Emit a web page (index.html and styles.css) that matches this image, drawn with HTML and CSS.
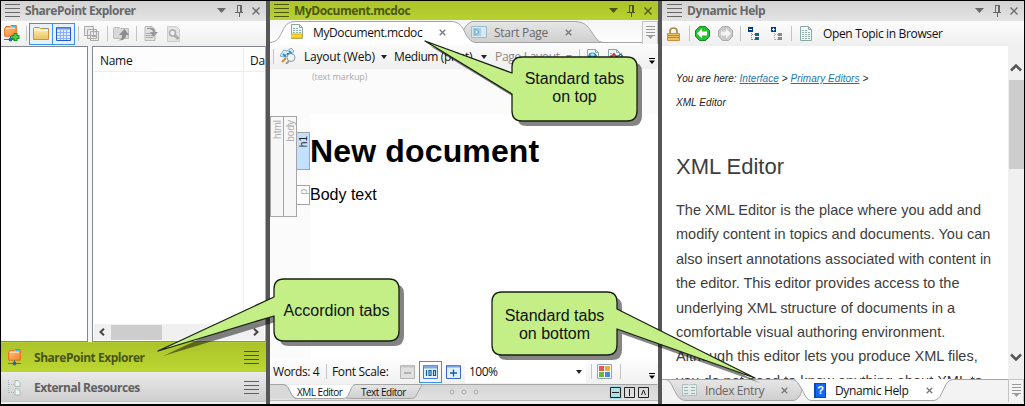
FILE: index.html
```html
<!DOCTYPE html>
<html lang="en">
<head>
<meta charset="utf-8">
<title>MyDocument.mcdoc</title>
<link rel="stylesheet" href="styles.css">
</head>
<body>
<svg class="defs" width="0" height="0">
  <defs>
    <linearGradient id="tabGrey" x1="0" y1="0" x2="0" y2="1"><stop offset="0" stop-color="#e6e6e6"/><stop offset="1" stop-color="#cfcfcf"/></linearGradient>
    <linearGradient id="folderOrange" x1="0" y1="0" x2="1" y2="1"><stop offset="0" stop-color="#ffc27a"/><stop offset="1" stop-color="#f8842c"/></linearGradient>
    <linearGradient id="folderYellow" x1="0" y1="0" x2="0" y2="1"><stop offset="0" stop-color="#fff3bd"/><stop offset="1" stop-color="#e9c25c"/></linearGradient>
    <symbol id="grip" viewBox="0 0 15 14"><path d="M0 .5h15M0 4.500h15M0 8.500h15M0 12.500h15" stroke="currentColor"/></symbol>
    <symbol id="controls" viewBox="0 0 44 14"><path d="M0 4h9l-4.500 5z" fill="currentColor"/><path d="M20.500 1v7M24.500 1v7M20 1.500h5M18 8.500h8M22.500 9v4M23.500 1v7" stroke="currentColor" fill="none"/><path d="M35.500 3.500l7 7M42.500 3.500l-7 7" stroke="currentColor" stroke-width="1.300"/></symbol>
    <symbol id="close" viewBox="0 0 7 7"><path d="M.7.7l5.600 5.600M6.300.7L.7 6.300" stroke="#777" stroke-width="1.300"/></symbol>
    <symbol id="overflow" viewBox="0 0 9 13"><path d="M0 .5h9M0 3.500h9M0 6.500h9M0 9.500h9" stroke="#999"/><path d="M2 10h5l-2.500 3z" fill="#999"/></symbol>
    <symbol id="more" viewBox="0 0 6 6"><path d="M0 .5h6" stroke="#000"/><path d="M0 2.500h6L3 6z"/></symbol>
    <symbol id="doc" viewBox="0 0 12 15"><path d="M.5.5h8l3 3v11H.5z" fill="#f4faf8" stroke="#8aa8a2"/><path d="M8.500.5v3h3" fill="none" stroke="#8aa8a2"/><path d="M2 4.500h5M2 6.500h8M2 8.500h8M2 10.500h8M2 12.500h8" stroke="#91b0ae" stroke-dasharray="2 1"/></symbol>
    <symbol id="sp" viewBox="0 0 13 17"><path d="M.7 3.500L2 1.500h4l1-1h5.300v10.700H.7z" fill="url(#folderOrange)" stroke="#e96b20"/><path d="M2 3.200h9" stroke="#fff0d0"/><path d="M8 1.500h4" stroke="#37bde8" stroke-width="1.500"/><path d="M6.500 11v3M0 14.500h13" stroke="#4d6f84"/><circle cx="6.500" cy="14.500" r="1.900" fill="#2769ad"/></symbol>
  </defs>
</svg>
<div class="app">
  <section class="panel explorer">
    <header class="title"><svg class="grip"><use href="#grip"/></svg><b class="t-sp">SharePoint Explorer</b><svg class="controls"><use href="#controls"/></svg></header>
    <div class="toolbar">
      <svg class="i-connect" width="17" height="17"><use href="#sp" width="13" height="17"/><path d="M11.500 8v8M7.500 12h8" stroke="#199322" stroke-width="4"/><path d="M11.500 9v6M8.500 12h6" stroke="#46d152" stroke-width="2"/></svg>
      <i class="sep"></i>
      <span class="toggle"><svg width="17" height="15"><path d="M.5 13.500v-11l1-1h5l1 1h8v11z" fill="url(#folderYellow)" stroke="#c49736"/><path d="M1.500 4.500h13" stroke="#fff9dd"/><path d="M12 2.500h3" stroke="#37a9f0"/></svg></span><span class="toggle second"><svg width="15" height="14"><path d="M.5.500h14v13H.5z" fill="#e4edff" stroke="#2459c9"/><path d="M1 1.500h13" stroke="#7196e6" stroke-width="2"/><path d="M1 5.500h13M1 8.500h13M1 11.500h13M4.500 3v10M7.500 3v10M10.500 3v10" stroke="#8caef2"/></svg></span>
      <i class="sep s2"></i>
      <svg class="i-collapse" width="16" height="15" fill="#e9e9e9" stroke="#aaa"><path d="M.5.500h9v9h-9zM3.500 3.500h9v9h-9zM6.500 5.500h8v9h-8z"/><path d="M8 10h5" stroke-width="2"/></svg>
      <i class="sep s3"></i>
      <svg class="i-up" width="17" height="15"><path d="M.5 12.500v-10l1-1h5l1 1h8v10z" fill="#d8d8d8" stroke="#bbb"/><path d="M4 14c5 0 5-2 5-5H6l5.500-6L16 9h-3c0 4-3 6-9 5z" fill="#8d8d8d"/></svg>
      <i class="sep s4"></i>
      <svg class="i-export" width="15" height="16"><path d="M1 .5h7l3 3v11H1z" fill="#e2e2e2" stroke="#b9b9b9"/><path d="M2 7.500h7M2 9.500h7M2 11.500h7" stroke="#aaa"/><path d="M3 2c6-1 8 0 8 4h3l-4.500 5L6 6h3C8 3 6 3 3 3z" fill="#999"/></svg>
      <svg class="i-find" width="14" height="16"><path d="M.5.500h9l3 3v12H.5z" fill="#e4e4e4" stroke="#ccc"/><circle cx="5.500" cy="7" r="3" fill="#eee" stroke="#aaa" stroke-width="1.500"/><path d="M7.500 9l4 4" stroke="#aaa" stroke-width="3"/></svg>
    </div>
    <div class="browser">
      <div class="tree"></div>
      <div class="list">
        <div class="columns"><span class="c-name">Name</span><span class="c-date">Da</span></div>
        <div class="rows"><i></i></div>
        <div class="hscroll"><svg width="6" height="8"><path d="M5 .8L1.500 4 5 7.200" fill="none" stroke="#444" stroke-width="2"/></svg><i></i><svg width="6" height="8"><path d="M1 .8L4.500 4 1 7.200" fill="none" stroke="#444" stroke-width="2"/></svg></div>
      </div>
    </div>
    <div class="accordion active"><svg width="13" height="17"><use href="#sp"/></svg><b class="t-sp">SharePoint Explorer</b><svg class="grip"><use href="#grip"/></svg></div>
    <div class="accordion"><svg width="13" height="17" fill="#edf3f2" stroke="#a8bbb9"><path d="M.5 1v14M1 5.500h5M1 13.500h5" stroke-dasharray="1 1"/><path d="M7 1.500h3l2 2v4H7zM7 10h3l2 2v4H7z"/></svg><b class="t-er">External Resources</b><svg class="grip"><use href="#grip"/></svg></div>
  </section>

  <section class="panel editor">
    <header class="title green"><svg class="grip"><use href="#grip"/></svg><b class="t-doc">MyDocument.mcdoc</b><svg class="controls"><use href="#controls"/></svg></header>
    <div class="tabs">
      <svg class="tabshape" width="387" height="24"><path d="M191 21C193 12 193 6 202 1.500H305C316 2 319 8 323 14s6 8.500 12 8.500H191z" fill="url(#tabGrey)" stroke="#a5a5a5"/><path d="M0 24V22.500C7 22 9 18 12 12S17 1.500 26 1.500H181c8 0 11 5 14 11s6 10 11 10H387V24" fill="#fff"/><path d="M0 22.500C7 22 9 18 12 12S17 1.500 26 1.500H181c8 0 11 5 14 11s6 10 11 10H387" fill="none" stroke="#a5a5a5"/></svg>
      <svg class="i-doc" width="13" height="16"><use href="#doc" width="12" height="15"/><path d="M0 10h11v4H0z" fill="#ffd92e" stroke="#e7ae0d"/></svg>
      <span class="t-tab1">MyDocument.mcdoc</span><svg class="x1" width="7" height="7"><use href="#close"/></svg>
      <svg class="i-start" width="16" height="12"><path d="M.5.500h15v11H.5z" fill="#dce8ee" stroke="#9abdce"/><path d="M2 2h8v8H2z" fill="#a4cee5"/><path d="M4 3l4 3-4 3z" fill="#fff" stroke="#58a2c7"/></svg>
      <span class="t-tab2">Start Page</span><svg class="x2" width="7" height="7"><use href="#close"/></svg>
      <span class="flowbox"><svg width="9" height="13"><use href="#overflow"/></svg></span>
    </div>
    <div class="toolbar format">
      <i class="sep"></i>
      <svg class="i-tag" width="17" height="16"><path d="M1 6l3-4 3 1 4-3 3 3-4 5-4-2-2 3-4-1z" fill="#d7effa" stroke="#7daabd"/><path d="M3 6l3 3M9 3l3 3" stroke="#2d8fd0" stroke-width="2"/><path d="M7 5h3v3H7z" fill="#da3030"/><path d="M6 10l-4 4" stroke="#d28b34" stroke-width="2"/><circle cx="11" cy="9.500" r="4" fill="#edf4f6" stroke="#8b989e"/><path d="M9 13l-3 3" stroke="#999" stroke-width="2"/></svg>
      <span class="t-layout">Layout (Web)</span><i class="drop"></i>
      <span class="t-medium">Medium (print)</span><i class="drop"></i>
      <span class="t-page">Page Layout</span><i class="drop pale"></i>
      <i class="sep"></i>
      <svg class="i-globe" width="13" height="16"><use href="#doc" width="12" height="15"/><circle cx="5.500" cy="8" r="4.500" fill="#2389ce"/><path d="M3 5l3-1 2 2-3 2z" fill="#9ddbf5"/></svg>
      <svg class="i-linkdoc" width="16" height="16"><use href="#doc" width="12" height="15"/><path d="M2 9l4-4 4 5 4-2" fill="none" stroke="#d13b49" stroke-width="2"/><path d="M6 10l7-5 3 5" fill="none" stroke="#3a67b8" stroke-width="1.500"/></svg>
      <svg class="more" width="6" height="6"><use href="#more"/></svg>
    </div>
    <div class="canvas">
      <div class="markup">(text markup)</div>
      <div class="document">
        <div class="gutter">
          <div class="block tall"><span>html</span></div><div class="block tall b2"><span>body</span></div>
          <div class="stack"><div class="block h1"><span>h1</span></div><div class="block p"><span>p</span></div></div>
        </div>
        <div class="page"><h1>New document</h1><p>Body text</p></div>
      </div>
    </div>
    <div class="status">
      <span class="t-words">Words: 4</span><i class="sep"></i><span class="t-scale">Font Scale:</span>
      <svg class="i-minus" width="15" height="14"><path d="M.5.500h14v13H.5z" fill="#e0e0e0" stroke="#b5b5b5"/><path d="M1 1.500h13" stroke="#c4c4c4" stroke-width="2"/><path d="M4 8h7" stroke="#999" stroke-width="1.300"/></svg>
      <span class="hundred"><svg width="15" height="14"><path d="M.5.500h14v13H.5z" fill="#e4f4ff" stroke="#4a7bd0"/><path d="M1 2h13" stroke="#86a6df" stroke-width="3"/><path d="M3.500 5v6M6 5.500h2v5H6zM10.500 5.500h2v5h-2z" fill="none" stroke="#075d9c" stroke-width="1.200"/></svg></span>
      <svg class="i-plus" width="15" height="14"><path d="M.5.500h14v13H.5z" fill="#dff1ff" stroke="#3968c9"/><path d="M1 1.500h13" stroke="#7ca0e4" stroke-width="2"/><path d="M4 8h7M7.500 4.500v7" stroke="#096396" stroke-width="1.300"/></svg>
      <span class="combo">100%<i class="drop"></i></span><i class="sep c1"></i>
      <svg class="i-grid" width="15" height="15"><path d="M.5.500h14v14H.5z" fill="#fff" stroke="#9aa0b9"/><path d="M2 2h5v5H2z" fill="#e85753"/><path d="M8 2h5v5H8z" fill="#edae31"/><path d="M2 8h5v5H2z" fill="#6cba3d"/><path d="M8 8h5v5H8z" fill="#4585e4"/></svg><i class="sep c2"></i><svg class="more" width="6" height="6"><use href="#more"/></svg>
    </div>
    <div class="views">
      <svg class="viewshape" width="387" height="17"><path d="M76 14l5-10c1-3 2-3.500 5-3.500H152L146 12c-1 2-3 2.500-5 2.500H82z" fill="url(#tabGrey)" stroke="#a5a5a5"/><path d="M0 .5h12c5 0 6 3 8 7s3 7 8 7H73c4 0 5-3 7-7s2-7 7-7z" fill="#fff"/><path d="M0 .5h12c5 0 6 3 8 7s3 7 8 7H73c4 0 5-3 7-7s2-7 7-7H387" fill="none" stroke="#a5a5a5"/><path d="M0 .5h12c5 0 6 3 8 7s3 7 8 7H0z" fill="#d9d9d9"/><path d="M0 .5h12c5 0 6 3 8 7s3 7 8 7" fill="none" stroke="#a5a5a5"/></svg>
      <span class="t-xml">XML Editor</span><span class="t-text">Text Editor</span>
      <svg class="dots" width="30" height="6" fill="none" stroke="#aaa"><circle cx="3" cy="3" r="2"/><circle cx="15" cy="3" r="2"/><circle cx="27" cy="3" r="2"/></svg>
      <svg class="splits" width="41" height="13"><path d="M0 0h13v13H0z" fill="#afe0e7"/><path d="M1.500 1.500h10v10h-10zM3 6.500h7M15.500 1.500h10v10h-10zM20.500 3v7M29.500 1.500h10v10h-10zM32.500 9l2-5 2 5" fill="none" stroke="#222"/></svg>
    </div>
  </section>

  <section class="panel help">
    <header class="title"><svg class="grip"><use href="#grip"/></svg><b class="t-dh">Dynamic Help</b><svg class="controls"><use href="#controls"/></svg></header>
    <div class="toolbar">
      <svg class="i-lock" width="13" height="14"><path d="M3 7V4c0-4 7-4 7 0v3" fill="none" stroke="#ae8642" stroke-width="1.700"/><path d="M.5 6.500h12v7H.5z" fill="#edc268" stroke="#c7923c"/><path d="M1 8.500h11M1 10.500h11" stroke="#b98634"/></svg>
      <i class="sep"></i>
      <svg class="i-back" width="15" height="15"><path d="M4.500.5h6l4 4v6l-4 4h-6l-4-4v-6z" fill="#24c32f" stroke="#108b1c"/><path d="M2 7.500l5-5v3h5v4H7v3z" fill="#fff"/></svg>
      <svg class="i-forward" width="15" height="15"><path d="M4.500.5h6l4 4v6l-4 4h-6l-4-4v-6z" fill="#c9c9c9" stroke="#aaa"/><path d="M13 7.500l-5-5v3H3v4h5v3z" fill="#f4f4f4"/></svg>
      <i class="sep s2"></i>
      <svg class="i-tree" width="12" height="14"><path d="M0 0h5v5H0z" fill="#003c8c"/><path d="M1 2.500h3" stroke="#fff"/><path d="M3.500 6v7M4 7.500h4M4 12.500h4" stroke="#888" stroke-dasharray="1 1"/><path d="M7 6h4v3H7zM7 10h4v3H7z" fill="#116784"/></svg>
      <svg class="i-tree t2" width="12" height="14"><path d="M0 0h5v5H0z" fill="#003c8c"/><path d="M1 2.500h3M2.500 1v3" stroke="#fff"/><path d="M3.500 6v7M4 7.500h4M4 12.500h4" stroke="#aaa" stroke-dasharray="1 1"/><path d="M7 6h4v3H7zM7 10h4v3H7z" fill="#888"/></svg>
      <i class="sep s3"></i>
      <svg class="i-topic" width="12" height="15"><use href="#doc"/></svg>
      <span class="t-open">Open Topic in Browser</span>
    </div>
    <div class="reader">
      <article>
        <div class="crumbs">You are here: <a>Interface</a> &gt; <a>Primary Editors</a> &gt;<br>XML Editor</div>
        <h2>XML Editor</h2>
        <p>The XML Editor is the place where you add and<br>modify content in topics and documents. You can<br>also insert annotations associated with content in<br>the editor. This editor provides access to the<br>underlying XML structure of documents in a<br>comfortable visual authoring environment.<br>Although this editor lets you produce XML files,<br>you do not need to know anything about XML to</p>
      </article>
      <div class="vscroll"><svg width="12" height="9"><path d="M1 7.500l5-5 5 5" fill="none" stroke="#555" stroke-width="2.500"/></svg><i></i><svg width="12" height="9"><path d="M1 1.500l5 5 5-5" fill="none" stroke="#555" stroke-width="2.500"/></svg></div>
    </div>
    <div class="bottomtabs">
      <svg class="bottomshape" width="361" height="22"><path d="M0 .5h3c4 0 6 4 8 8 4 8 6 13 13 13H131c5 0 8-6 9-11L134 .5z" fill="url(#tabGrey)" stroke="#a5a5a5"/><path d="M129 .5c6 0 8 5 11 10s4 11 10 11H271c6 0 8-6 11-12S286 .5 293 .5z" fill="#fff"/><path d="M0 .5H129c6 0 8 5 11 10s4 11 10 11H271c6 0 8-6 11-12S286 .5 293 .5H361" fill="none" stroke="#a5a5a5"/></svg>
      <svg class="i-index" width="15" height="12"><path d="M.5.500h6l1 1 1-1h6v11H.5z" fill="#e4eceb" stroke="#b0c1c0"/><path d="M2 3.500h4M2 6.500h4M2 9.500h4M9 3.500h4M9 6.500h4M9 9.500h4" stroke="#93b2ac"/></svg>
      <span class="t-index">Index Entry</span><svg class="x1" width="7" height="7"><use href="#close"/></svg>
      <span class="book">?</span><span class="t-help">Dynamic Help</span><svg class="x2" width="7" height="7"><use href="#close"/></svg>
      <span class="flowbox"><svg width="9" height="13"><use href="#overflow"/></svg></span>
    </div>
  </section>
  <svg class="callouts" width="1025" height="406">
    <g fill="#000" opacity=".48" transform="translate(5 5)">
      <path d="M425 41L512 73V67q0-10 10-10H627q10 0 10 10V111q0 10-10 10H522q-10 0-10-10V94z"/>
      <path d="M158 351L274 297V289q0-10 10-10H389q10 0 10 10V331q0 10-10 10H284q-10 0-10-10V316z"/>
      <path d="M755 378L617 309V302q0-10-10-10H502q-10 0-10 10V345q0 10 10 10H607q10 0 10-10V329z"/>
    </g>
    <g fill="#c3ef86" stroke="#17210f" stroke-width="1.300" stroke-linejoin="round">
      <path d="M425 41L512 73V67q0-10 10-10H627q10 0 10 10V111q0 10-10 10H522q-10 0-10-10V94z"/>
      <path d="M158 351L274 297V289q0-10 10-10H389q10 0 10 10V331q0 10-10 10H284q-10 0-10-10V316z"/>
      <path d="M755 378L617 309V302q0-10-10-10H502q-10 0-10 10V345q0 10 10 10H607q10 0 10-10V329z"/>
    </g>
  </svg>
  <div class="note n1">Standard tabs<br>on top</div>
  <div class="note n2">Accordion tabs</div>
  <div class="note n3">Standard tabs<br>on bottom</div>
</div>
</body>
</html>
```

FILE: styles.css
```css
*{box-sizing:border-box}
body{margin:0;font:12px/16px "Open Sans","Noto Sans",sans-serif;color:#111;overflow:hidden}
svg{flex:none;display:block}
span,b{flex:none;white-space:nowrap}
i{flex:none;display:block}
.defs{position:absolute}
.app{position:relative;width:1025px;height:406px;border:1px solid #000;border-bottom-width:2px;background:#565656;display:flex;gap:4px;overflow:hidden}
.panel{display:flex;flex-direction:column;background:#f1f1f1;overflow:hidden}
.explorer{width:265px}
.editor{width:388px}
.help{width:362px}
.title{height:20px;flex:none;display:flex;align-items:center;padding:0 5px 0 4px;color:#686868;background:linear-gradient(#d2d2d2,#e4e4e4)}
.help .title{padding-left:5px}
.title.green{height:19px;background:linear-gradient(#adc32b,#b9d130);color:#4b5710}
.grip{width:15px;height:14px}
.title b{margin-left:5px}
.t-sp,.t-er{letter-spacing:-.47px}
.t-doc{letter-spacing:-.43px}
.t-dh{letter-spacing:-.4px}
.controls{width:44px;height:14px;margin-left:auto}
.toolbar{height:25px;flex:none;display:flex;align-items:center;background:linear-gradient(#fcfcfc,#efefef)}
.sep{width:1px;height:15px;background:#c5c5c5}

.i-connect{margin-left:3px}
.i-connect + .sep{margin:0 2px 0 5px}
.toggle{width:24px;height:22px;border:1px solid #3795e8;background:#e8f1fa;display:grid;place-items:center}
.toggle.second{margin-left:-1px;width:23px}
.s2{margin-left:3px}
.i-collapse{margin-left:5px}
.s3{margin-left:7px}
.i-up{margin-left:5px}
.s4{margin-left:6px}
.i-export{margin-left:7px}
.i-find{margin-left:8px}
.browser{height:296px;flex:none;display:flex;justify-content:space-between;background:#f7f7f7}
.tree{width:87px;background:#fff;border:1px solid #828790;border-left:0}
.list{width:174px;background:#fff;border:1px solid #828790;border-right-color:#aaa;padding:1px;display:flex;flex-direction:column}
.columns{height:24px;display:flex;background:#fdfdfd;border-bottom:1px solid #e6edf5}
.c-name{width:150px;padding:5px 0 0 6px;letter-spacing:-.3px;border-right:1px solid #e6edf5}
.c-date{padding:5px 0 0 6px;letter-spacing:-.3px}
.rows{flex:1}
.rows i{width:150px;height:100%;border-right:1px solid #edf1f6}
.hscroll{height:16px;display:flex;align-items:center;background:#f0f0f0;padding:0 5px}
.hscroll i{width:51px;height:15px;background:#cdcdcd;margin:0 auto 0 6px}
.accordion{height:30px;flex:none;display:flex;align-items:center;padding:1px 7px 0;background:linear-gradient(#e8e8e8,#cfcfcf);border-top:1px solid #ececec;border-bottom:1px solid #c3c3c3;color:#606060}
.accordion.active{background:linear-gradient(#acc32b,#bbd631);border-color:#b7cf35;color:#485511}
.accordion b{margin-left:13px}
.accordion .grip{margin-left:auto}

.tabs{height:24px;flex:none;position:relative;display:flex;align-items:center;background:linear-gradient(#f4f4f4,#fff)}
.tabshape,.viewshape,.bottomshape{position:absolute;left:0;top:0}
.tabs > :not(.tabshape),.views > :not(.viewshape),.bottomtabs > :not(.bottomshape){position:relative}
.i-doc{margin-left:21px}
.t-tab1{margin-left:9px;width:109px;margin-top:2px;letter-spacing:-.4px}
.tabs .x1{margin-left:17px}
.i-start{margin-left:25px}
.t-tab2{margin-left:7px;width:55px;color:#686868;margin-top:2px;letter-spacing:-.3px}
.tabs .x2{margin-left:16px}
.flowbox{width:16px;height:23px;margin-left:auto;border:1px solid #c4c4c4;border-bottom:0;background:#f4f4f4;display:grid;place-items:center}
.format > .sep:first-child{margin-left:3px}
.i-tag{margin-left:6px;margin-top:-1px}
.drop{width:0;height:0;border:3px solid transparent;border-top:4px solid #222;border-bottom:0}
.pale{border-top-color:#999}
.t-layout{margin-left:7px;width:72px;letter-spacing:-.2px}
.t-layout + .drop{margin-left:5px}
.t-medium{margin-left:7px;width:80px;letter-spacing:-.38px}
.t-medium + .drop{margin-left:7px}
.t-page{margin-left:8px;width:65px;color:#888;letter-spacing:-.3px}
.t-page + .drop{margin-left:6px}
.pale + .sep{margin-left:7px}
.i-globe{margin-left:7px}
.i-linkdoc{margin-left:8px}
.more{margin:9px 3px 0 auto}
.canvas{height:290px;flex:none;background:#fbfbfb}
.markup{height:45px;padding:0 0 0 42px;color:#aaa;font:9px/16px "Open Sans",sans-serif;letter-spacing:-.1px}
.document{height:245px;display:flex}
.gutter{width:40px;display:flex;padding-top:2px;align-items:flex-start}
.block{border:1px solid #a5a5a5;background:#fbfbfb;color:#aaa;font:10px/11px "Liberation Sans",sans-serif;display:flex;justify-content:center;align-items:flex-start}
.block span{writing-mode:vertical-rl;transform:rotate(180deg);margin-top:3px}
.tall{width:14px;height:101px;background:#f7f7f7}
.b2{margin-left:-1px}
.stack{margin-left:-1px;padding-top:16px}
.block.h1{width:14px;height:38px;background:#c2e0ff;color:#222}
.block.p{width:14px;height:20px;margin-top:15px;background:#fff}
.page{flex:1;background:#fff;font-family:"Liberation Sans",sans-serif;color:#000}
.page h1{font-size:32px;line-height:37px;margin:19px 0 0;letter-spacing:.15px}
.page p{font-size:16px;line-height:18px;margin:16px 0 0}
.status{height:25px;flex:none;display:flex;align-items:center;background:linear-gradient(#fdfdfd,#f1f1f1)}
.t-words{margin-left:3px;width:46px;letter-spacing:-.4px}
.t-words + .sep{margin-left:7px}
.t-scale{margin-left:5px;width:57px;letter-spacing:-.33px}
.i-minus{margin-left:11px}
.hundred{width:23px;height:22px;margin-left:4px;border:1px solid #3795e8;display:grid;place-items:center}
.i-plus{margin-left:4px}
.combo{width:121px;height:23px;margin-left:4px;background:#fff;padding:4px 4px 0;display:flex;letter-spacing:-.5px}
.combo .drop{margin:6px 0 0 auto}
.c1{margin-left:5px}
.i-grid{margin-left:5px}
.c2{margin-left:8px}
.views{height:17px;flex:none;position:relative;display:flex;align-items:center;background:linear-gradient(#d6d6d6,#e1e1e1);border-bottom:1px solid #bbb;font-size:10px;line-height:15px;letter-spacing:-.5px}
.views span{margin-top:1px}
.t-xml{margin-left:27px;width:46px}
.t-text{margin-left:18px;width:46px}
.dots{margin-left:42px}
.splits{margin-left:auto;margin-right:8px}
.i-lock{margin-left:5px}
.i-lock + .sep{margin-left:9px}
.i-back{margin-left:5px}
.i-forward{margin-left:8px}
.help .s2{margin-left:7px}
.i-tree{margin-left:7px}
.t2{margin-left:11px}
.help .s3{margin-left:8px}
.i-topic{margin-left:8px}
.t-open{margin-left:11px;letter-spacing:-.35px}
.reader{height:333px;flex:none;display:flex;background:#fff}
article{flex:1;padding:21px 0 0 14px;font-family:"Liberation Sans",sans-serif;color:#3d3d3d;overflow:hidden;white-space:nowrap}
.crumbs{font-size:10px;line-height:24px;font-style:italic;color:#222;letter-spacing:.05px}
.crumbs a{color:#1b79af;text-decoration:underline}
article h2{font-size:22px;font-weight:400;line-height:28px;margin:38px 0 0}
article p{font-size:14.500px;line-height:24.400px;margin:17px 0 0}
.vscroll{width:16px;background:#f0f0f0;display:flex;flex-direction:column;align-items:center;padding:17px 0}
.vscroll i{width:15px;height:89px;background:#cdcdcd;margin:8px 0 auto}
.bottomtabs{height:22px;flex:none;position:relative;display:flex;align-items:center;background:#f3f3f3}
.i-index{margin-left:20px}
.t-index{margin-left:8px;width:59px;color:#666;margin-top:2px;letter-spacing:-.4px}
.bottomtabs .x1{margin-left:17px}
.book{width:12px;height:15px;margin-left:26px;background:#1768ef;border:1px solid #084ab9;border-left-width:2px;color:#fff;font:bold 11px/13px "Liberation Sans",sans-serif;text-align:center}
.t-help{margin-left:9px;width:74px;margin-top:2px;letter-spacing:-.35px}
.bottomtabs .x2{margin-left:17px}
.callouts{position:absolute;left:-1px;top:-1px}
.note{position:absolute;width:125px;text-align:center;font:16px/18px "Liberation Sans",sans-serif;color:#111}
.n1{left:511px;top:69px}
.n2{left:273px;top:301px}
.n3{left:491px;top:306px}
```
